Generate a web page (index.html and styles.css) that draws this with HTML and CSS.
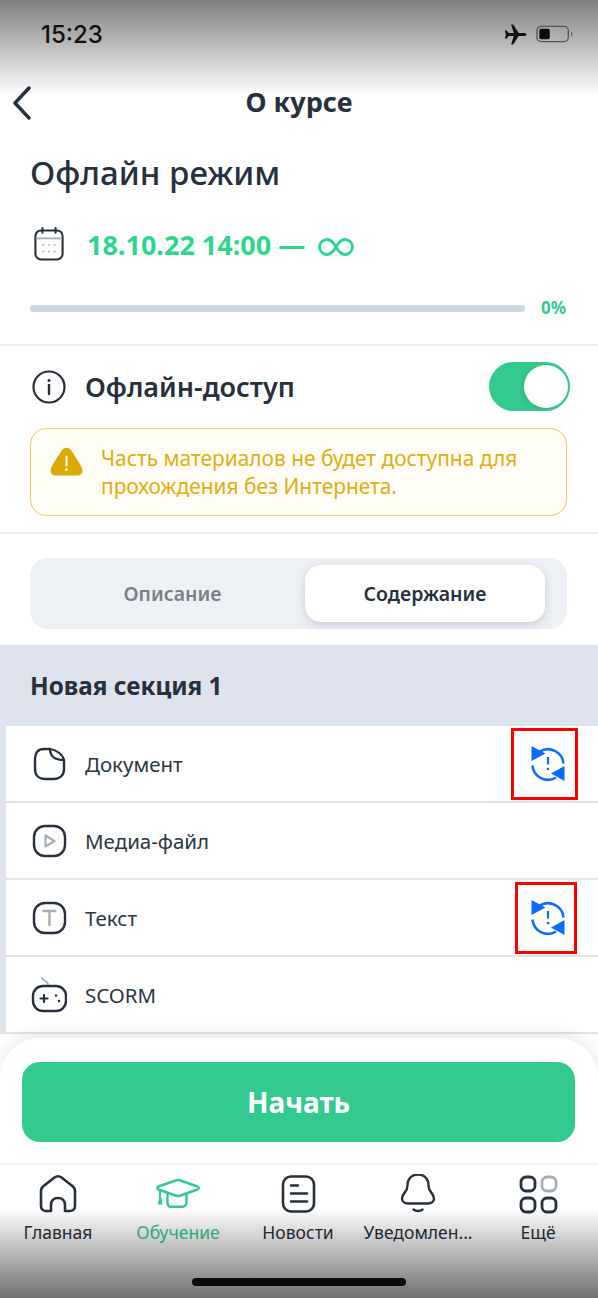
FILE: index.html
```html
<!DOCTYPE html>
<html lang="ru">
<head>
<meta charset="utf-8">
<title>О курсе</title>
<link rel="stylesheet" href="styles.css">
</head>
<body>
<div class="app">
  <div class="shade shade-top"></div>
  <div class="shade shade-bottom"></div>

  <div class="status">
    <span class="time">15:23</span>
    <div class="status-icons">
      <svg class="plane" viewBox="0 0 24 22"><path fill="#111" d="M23.5 11c0-1-1.2-1.7-2.6-1.700h-5.600L9.600 0.500H7.400l2.800 8.800H4.800L2.900 6.700H0.900l1 4.300-1 4.300h2l1.900-2.600h5.400L7.400 21.500h2.200l5.700-8.800h5.600c1.400 0 2.600-.7 2.600-1.700z"/></svg>
      <svg class="battery" viewBox="0 0 40 18"><rect x="1" y="1" width="33" height="16" rx="4.500" fill="none" stroke="#555" stroke-width="1.400"/><rect x="3.500" y="3.500" width="11" height="11" rx="2" fill="#0c0c0c"/><path d="M37 6.500c1.500.6 1.500 4.400 0 5z" fill="#555"/></svg>
    </div>
  </div>

  <header class="nav">
    <svg class="back" viewBox="0 0 20 34"><path d="M17 2 3 17l14 15" fill="none" stroke="#27303d" stroke-width="3.400" stroke-linecap="round" stroke-linejoin="round"/></svg>
    <h1 class="nav-title">О курсе</h1>
  </header>

  <section class="course">
    <h2 class="course-title">Офлайн режим</h2>
    <div class="date-row">
      <svg class="calendar" viewBox="0 0 32 36"><rect x="1.500" y="3.500" width="29" height="31" rx="6" fill="none" stroke="#27303d" stroke-width="2.200"/><path d="M2 12h28" stroke="#a9adb3" stroke-width="2"/><path d="M9 1v5M23 1v5" stroke="#27303d" stroke-width="2.200" stroke-linecap="round"/><g fill="#a9adb3"><circle cx="10" cy="19" r="1"/><circle cx="16" cy="19" r="1"/><circle cx="22" cy="19" r="1"/><circle cx="10" cy="26" r="1"/><circle cx="16" cy="26" r="1"/><circle cx="22" cy="26" r="1"/></g></svg>
      <span class="date-text">18.10.22 14:00 —</span>
      <svg class="infinity" viewBox="0 0 36 18"><path d="M18 9C15.500 4.500 13 1.500 9 1.500a7.500 7.500 0 0 0 0 15c4 0 6.500-3 9-7.500s5-7.500 9-7.500a7.500 7.500 0 0 1 0 15c-4 0-6.500-3-9-7.500z" fill="none" stroke="#2ed68d" stroke-width="2.800"/></svg>
    </div>
    <div class="progress-row">
      <div class="progress-track"></div>
      <span class="progress-value">0%</span>
    </div>
  </section>

  <section class="offline">
    <div class="offline-row">
      <svg class="info" viewBox="0 0 34 34"><circle cx="17" cy="17" r="15.500" fill="none" stroke="#27303d" stroke-width="2.200"/><path d="M17 15v9" stroke="#27303d" stroke-width="2.400" stroke-linecap="round"/><circle cx="17" cy="10.500" r="1.500" fill="#27303d"/></svg>
      <span class="offline-label">Офлайн-доступ</span>
      <div class="toggle"><div class="knob"></div></div>
    </div>
    <div class="notice">
      <svg class="warn" viewBox="0 0 33 29"><path d="M11 4.500c2.800-5 8.200-5 11 0 3 5 7 10.500 9.500 15.500 2 4.500.5 8.500-4.500 8.500H6c-5 0-6.500-4-4.500-8.500C4 15 8 9.500 11 4.500z" fill="#dcaa00"/><path d="M16.500 9.500v9" stroke="#fff" stroke-width="2" stroke-linecap="round"/><circle cx="16.500" cy="22.500" r="1.300" fill="#fff"/></svg>
      <p class="notice-text">Часть материалов не будет доступна для прохождения без Интернета.</p>
    </div>
  </section>

  <div class="tabs-wrap">
    <div class="tabs">
      <div class="tab">Описание</div>
      <div class="tab tab-active">Содержание</div>
    </div>
  </div>

  <section class="content">
    <h3 class="section-title">Новая секция 1</h3>
    <ul class="lessons">
      <li class="lesson">
        <svg class="lesson-icon" viewBox="0 0 36 36"><path d="M19 3h-6C6.500 3 4 7 4 13v10c0 6 3.500 10 10 10h9c6 0 10-4 10-10v-9" fill="none" stroke="#27303d" stroke-width="2.400" stroke-linecap="round"/><path d="M19 3c0 7 5 11 14 11-1-5-7-10-14-11z" fill="none" stroke="#27303d" stroke-width="2.200" stroke-linejoin="round"/></svg>
        <span class="lesson-name">Документ</span>
        <div class="mark mark-a"></div>
        <svg class="sync" viewBox="0 0 36 36"><use href="#sync"/></svg>
      </li>
      <li class="lesson">
        <svg class="lesson-icon" viewBox="0 0 36 36"><rect x="3" y="3" width="31" height="30" rx="11" fill="none" stroke="#27303d" stroke-width="2.400"/><path d="M14.500 12.500v11l9-5.500z" fill="none" stroke="#a9adb3" stroke-width="2.200" stroke-linejoin="round"/></svg>
        <span class="lesson-name">Медиа-файл</span>
      </li>
      <li class="lesson">
        <svg class="lesson-icon" viewBox="0 0 36 36"><rect x="3" y="3" width="31" height="30" rx="11" fill="none" stroke="#27303d" stroke-width="2.400"/><path d="M11.500 11h14M18.500 11v15" fill="none" stroke="#a9adb3" stroke-width="2.400"/></svg>
        <span class="lesson-name">Текст</span>
        <div class="mark mark-b"></div>
        <svg class="sync" viewBox="0 0 36 36"><use href="#sync"/></svg>
      </li>
      <li class="lesson">
        <svg class="lesson-icon" viewBox="0 0 36 36"><path d="M11 1c0 3 5 2 6 6" fill="none" stroke="#a9adb3" stroke-width="1.800" stroke-linecap="round"/><rect x="2" y="9" width="33" height="25" rx="10" fill="none" stroke="#27303d" stroke-width="2.400"/><path d="M9.500 21.500h7M13 18v7" stroke="#27303d" stroke-width="2.200" stroke-linecap="round"/><circle cx="25" cy="18.500" r="1.200" fill="#27303d"/><circle cx="28" cy="24" r="1.200" fill="#27303d"/></svg>
        <span class="lesson-name">SCORM</span>
      </li>
    </ul>
  </section>

  <div class="sheet">
    <div class="sheet-action"><button class="start" type="button">Начать</button></div>
    <nav class="tabbar">
      <div class="item">
        <svg class="item-icon" viewBox="0 0 40 40"><path d="M13 37H8c-3 0-5-2-5-5V17c0-2 .8-3.500 2.300-4.700L16.500 3.500c2.200-1.600 4.800-1.600 7 0l11.200 8.800c1.500 1.200 2.300 2.700 2.300 4.700v15c0 3-2 5-5 5h-5v-6c0-4-2.500-7-7-7s-7 3-7 7z" fill="none" stroke="#27303d" stroke-width="2.600" stroke-linejoin="round"/></svg>
        <span class="item-label">Главная</span>
      </div>
      <div class="item item-active">
        <svg class="item-icon" viewBox="0 0 46 40"><path d="M20.500 6.500 3.500 12.500c-1.800.7-1.800 2.300 0 3l17 6c1.700.6 3.300.6 5 0l17-6c1.800-.7 1.800-2.300 0-3l-17-6c-1.700-.6-3.300-.6-5 0z" fill="none" stroke="#34c98f" stroke-width="2.400" stroke-linejoin="round"/><path d="M12.500 20v9.500c0 1.500.8 2.500 2.500 3.300h13c1.700-.8 3.500-1.800 3.500-3.300V20" fill="none" stroke="#34c98f" stroke-width="2.400" stroke-linecap="round" stroke-linejoin="round"/><path d="M5 16v9" stroke="#34c98f" stroke-width="2.200"/><path d="M3.500 30l1-5.500h1.500l1 5.500z" fill="#34c98f" stroke="#34c98f" stroke-width="1.200" stroke-linejoin="round"/></svg>
        <span class="item-label">Обучение</span>
      </div>
      <div class="item">
        <svg class="item-icon" viewBox="0 0 40 40"><rect x="5" y="2.500" width="31" height="35" rx="8" fill="none" stroke="#27303d" stroke-width="2.600"/><path d="M13 11.500h7M13 19.500h16M13 27.500h16" stroke="#27303d" stroke-width="2.600" stroke-linecap="round"/></svg>
        <span class="item-label">Новости</span>
      </div>
      <div class="item">
        <svg class="item-icon" viewBox="0 0 40 40"><path d="M20 .5c-7 0-10.500 5-10.500 11 0 7-5.500 7.500-5.500 13 0 3 2.500 5 6 5h20c3.500 0 6-2 6-5 0-5.500-5.500-6-5.500-13 0-6-3.500-11-10.500-11z" fill="none" stroke="#27303d" stroke-width="2.400" stroke-linejoin="round"/><path d="M15.500 35.500c2.500 2 6.500 2 9 0" fill="none" stroke="#27303d" stroke-width="2.400" stroke-linecap="round"/></svg>
        <span class="item-label">Уведомлен...</span>
      </div>
      <div class="item">
        <svg class="item-icon" viewBox="0 0 40 40"><g fill="none" stroke-width="2.800"><rect x="3" y="3" width="14" height="14" rx="5" stroke="#27303d"/><rect x="24" y="3" width="14" height="14" rx="5" stroke="#a9adb3"/><rect x="3" y="24" width="14" height="14" rx="5" stroke="#27303d"/><rect x="24" y="24" width="14" height="14" rx="5" stroke="#27303d"/></g></svg>
        <span class="item-label">Ещё</span>
      </div>
    </nav>
  </div>

  <div class="home-indicator"></div>

  <svg class="sprite" width="0" height="0">
    <symbol id="sync" viewBox="0 0 36 36">
      <path d="M9.500 5.800A15.500 15.500 0 0 1 33.500 17.500" fill="none" stroke="#0a6cff" stroke-width="2.600"/>
      <path d="M2.500 19.500A15.500 15.500 0 0 0 26 31.500" fill="none" stroke="#0a6cff" stroke-width="2.600"/>
      <path d="M1.500 0v15l14-7.500zM34.500 20v15l-13.500-7.500z" fill="#0a6cff"/>
      <path d="M18 11v7.500" stroke="#0a6cff" stroke-width="2.200"/>
      <circle cx="18" cy="23" r="1.300" fill="#0a6cff"/>
    </symbol>
  </svg>
</div>
</body>
</html>
```

FILE: styles.css
```css
* { box-sizing: border-box; }
html, body { margin: 0; padding: 0; height: 100%; background: #fff; }
body { font-family: "Noto Sans", "Open Sans", sans-serif; color: #27303d; overflow: hidden; }
h1, h2, h3, p, ul { margin: 0; padding: 0; }
ul { list-style: none; }

.app { position: relative; width: 598px; height: 1298px; overflow: hidden; background: #fff; }

.shade { position: absolute; left: 0; right: 0; z-index: 20; pointer-events: none; }
.shade-top { top: 0; height: 96px; background: linear-gradient(to bottom, rgba(0,0,0,.5), rgba(0,0,0,0)); }
.shade-bottom { bottom: 0; height: 90px; background: linear-gradient(to top, rgba(0,0,0,.56), rgba(0,0,0,0)); }

.status { position: relative; z-index: 21; height: 68px; display: flex; justify-content: space-between; align-items: center; padding: 0 24px 0 41px; }
.time { font-family: "Inter", "Liberation Sans", sans-serif; font-size: 24px; font-weight: 500; color: #111; }
.status-icons { display: flex; align-items: center; gap: 9px; }
.plane { width: 23px; height: 21px; }
.battery { width: 38px; height: 18px; }

.nav { position: relative; height: 70px; display: flex; align-items: center; justify-content: center; padding-bottom: 3px; }
.back { position: absolute; left: 12px; top: 18px; width: 20px; height: 34px; }
.nav-title { font-size: 27px; font-weight: 700; color: #27303d; line-height: 1; }

.course { padding: 0 31px 0 30px; height: 206px; }
.course-title { font-size: 33px; font-weight: 500; line-height: 42px; padding-top: 14px; height: 56px; }
.date-row { display: flex; align-items: center; margin-top: 32px; height: 36px; }
.calendar { width: 30px; height: 34px; margin-left: 4px; }
.date-text { margin-left: 23px; font-size: 27px; font-weight: 700; color: #2ed68d; }
.infinity { width: 36px; height: 18px; margin: 6px 0 0 13px; }
.progress-row { display: flex; align-items: center; margin-top: 36px; }
.progress-track { width: 495px; height: 7px; border-radius: 4px; background: #cdd4e3; }
.progress-value { margin-left: 16px; font-size: 17px; font-weight: 700; color: #34c98f; line-height: 20px; }

.offline { border-top: 2px solid #ececec; border-bottom: 2px solid #ececec; height: 190px; padding: 0 28px 0 30px; }
.offline-row { display: flex; align-items: center; height: 82px; padding-bottom: 1px; }
.info { width: 34px; height: 34px; margin-left: 2px; }
.offline-label { margin-left: 19px; font-size: 27px; font-weight: 600; flex: 1; }
.toggle { width: 81px; height: 49px; border-radius: 25px; background: #34c98f; position: relative; }
.knob { position: absolute; right: 2px; top: 3px; width: 44px; height: 43px; border-radius: 50%; background: #fff; box-shadow: -2px 1px 4px rgba(0,0,0,.08); }
.notice { width: 537px; height: 88px; border: 1.500px solid #ecca5c; border-radius: 16px; background: #fffdf6; display: flex; padding: 15px 0 0 19px; }
.warn { width: 33px; height: 29px; margin-top: 3px; flex: none; }
.notice-text { margin-left: 18px; font-size: 20.900px; line-height: 28px; color: #e0ad0e; width: 460px; }

.tabs-wrap { padding: 24px 31px 16px 30px; }
.tabs { height: 71px; background: #edf0f5; border-radius: 18px; display: flex; padding: 7px 22px 7px 0; }
.tab { flex: 0 0 275px; padding-left: 10px; display: flex; align-items: center; justify-content: center; font-size: 19.500px; font-weight: 600; color: #7b8087; }
.tab-active { flex: 0 0 240px; padding-left: 0; background: #fff; border-radius: 16px; color: #27303d; box-shadow: 0 3px 8px rgba(60,70,90,.2); }

.content { background: #dfe3ee; padding-left: 6px; }
.section-title { font-size: 24.300px; font-weight: 700; line-height: 81px; padding-left: 24px; height: 81px; }
.lessons { background: #fff; }
.lesson { position: relative; height: 77px; display: flex; align-items: center; border-bottom: 2px solid #e4e4e4; margin-left: -6px; padding-left: 31px; background: linear-gradient(to right, #dfe3ee 6px, #fff 6px); }
.lesson-icon { width: 36px; height: 36px; }
.lesson-name { margin-left: 18px; font-size: 20.500px; color: #2c3542; }
.sync { position: absolute; left: 530px; top: 20px; width: 36px; height: 36px; }
.mark { position: absolute; border: 3px solid #f00; }
.mark-a { left: 511px; top: 2px; width: 67px; height: 72px; }
.mark-b { left: 515px; top: 2px; width: 62px; height: 72px; }

.sheet { position: absolute; left: 0; right: 0; top: 1038px; bottom: 0; background: #fff; border-radius: 40px 40px 0 0; box-shadow: 0 -6px 14px rgba(0,0,0,.08); z-index: 10; }
.sheet-action { padding: 24px 23px 0 22px; height: 127px; border-bottom: 2px solid #f1f1f1; }
.start { display: block; width: 100%; height: 80px; border: 0; border-radius: 18px; background: #34c98f; color: #fff; font-family: inherit; font-size: 28px; font-weight: 700; }
.tabbar { display: flex; width: 600px; margin-left: -2px; padding-top: 9px; }
.item { flex: 1 1 0; min-width: 0; display: flex; flex-direction: column; align-items: center; }
.item-icon { width: 40px; height: 40px; }
.item-label { margin-top: 6px; font-size: 17.500px; line-height: 24px; color: #27303d; white-space: nowrap; }
.item-active .item-label { color: #34c98f; }
.item-active .item-icon { width: 46px; }

.home-indicator { position: absolute; left: 192px; top: 1278px; width: 214px; height: 8px; border-radius: 4px; background: #0b0b0b; z-index: 21; }
.sprite { position: absolute; }
```
